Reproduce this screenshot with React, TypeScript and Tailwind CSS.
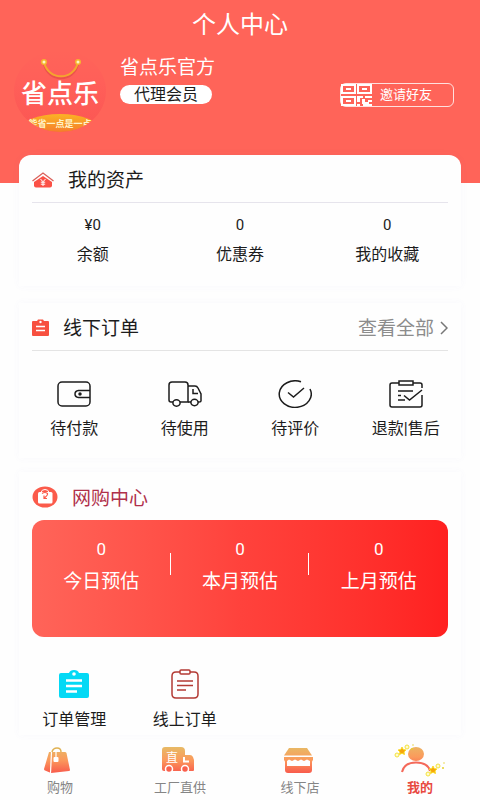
import React from 'react';

interface Item {
  label: string;
  icon: React.ReactNode;
}

interface Stat {
  label: string;
  value: string;
}

function Logo() {
  return (
    <svg width="94" height="84" viewBox="0 0 94 84" role="img" aria-label="省点乐">
      <defs>
        <linearGradient id="logo-bg" x1="0" y1="0" x2="0" y2="1">
          <stop offset="0" stopColor="#ff6459" />
          <stop offset="0.4" stopColor="#ff5f59" />
          <stop offset="1" stopColor="#fb5552" />
        </linearGradient>
        <linearGradient id="logo-gold" x1="0" y1="0" x2="0" y2="1">
          <stop offset="0" stopColor="#fbb324" />
          <stop offset="0.6" stopColor="#f57a2c" />
        </linearGradient>
        <clipPath id="logo-clip">
          <ellipse cx="46" cy="41" rx="46" ry="41" />
        </clipPath>
      </defs>
      <g clipPath="url(#logo-clip)">
        <rect width="94" height="84" fill="url(#logo-bg)" />
        <ellipse cx="46" cy="80" rx="40" ry="16" fill="url(#logo-gold)" />
        <text x="46" y="77" textAnchor="middle" fontSize="9" fontWeight="700" fill="#fff3c8">
          能省一点是一点
        </text>
      </g>
      <path d="M30 14C34 33 60 33 64 14" fill="none" stroke="#d8433f" strokeWidth="2" opacity="0.5" />
      <path d="M30 12C34 31 60 31 64 12" fill="none" stroke="#f4a52e" strokeWidth="2" />
      <circle cx="30" cy="12" r="3" fill="#f5b52f" />
      <circle cx="64" cy="12" r="3" fill="#f5b52f" />
      <circle cx="30" cy="12" r="1.5" fill="#fff6c4" />
      <circle cx="64" cy="12" r="1.5" fill="#fff6c4" />
      <text x="46" y="53" textAnchor="middle" fontSize="26" fontWeight="500" fill="#fff">
        省点乐
      </text>
    </svg>
  );
}

function QrIcon() {
  return (
    <svg width="31" height="22" viewBox="0 0 31 22" aria-hidden="true">
      <g fill="none" stroke="#fff" strokeWidth="2">
        <rect x="1" y="1" width="13" height="8" />
        <rect x="17" y="1" width="13" height="8" />
        <rect x="1" y="13" width="13" height="8" />
      </g>
      <path
        d="M5 4h5v2H5zM21 4h5v2h-5zM5 16h5v2H5zM16 12h6v2h-3v4h-3zM24 12h7v2h-7zM21 15h3v3h3v-2h4v2h-3v2h3v2h-9v-2h-1zM16 20h3v2h-3z"
        fill="#fff"
      />
    </svg>
  );
}

function HouseIcon() {
  return (
    <svg width="22" height="16" viewBox="0 0 22 16" aria-hidden="true">
      <path d="M0.5 9L11 1L21.500 9" fill="none" stroke="#d9605a" strokeWidth="1.300" />
      <path d="M2 10L11 4L20 10V13.500Q20 15.500 18 15.500H4Q2 15.500 2 13.500Z" fill="#fb5146" />
      <path d="M8.500 7L11 9.800L13.500 7M11 9.800V14M8.800 10.200H13.200M8.800 12.200H13.200" fill="none" stroke="#fff" strokeWidth="1" />
    </svg>
  );
}

function BoardIcon() {
  return (
    <svg width="17" height="17" viewBox="0 0 17 17" aria-hidden="true">
      <path d="M1 2H5L6 0.500H11L12 2H16Q17 2 17 3V16Q17 17 16 17H1Q0 17 0 16V3Q0 2 1 2Z" fill="#f7503f" />
      <circle cx="8.500" cy="3" r="1.200" fill="#fff" />
      <path d="M4 7.500H13M4 11.500H13" stroke="#fff" strokeWidth="1.400" />
    </svg>
  );
}

function BagIcon() {
  return (
    <svg width="26" height="22" viewBox="0 0 26 22" aria-hidden="true">
      <ellipse cx="13" cy="11" rx="12.500" ry="10.500" fill="#fb5b4b" />
      <path d="M9 6.500Q9.500 3.500 13 3.500Q16.500 3.500 17 6.500" fill="none" stroke="#fff" strokeWidth="1" />
      <rect x="6" y="6" width="14.500" height="11.500" rx="1.500" fill="#fff" />
      <path d="M10 7.500Q13 5.500 15.500 7.500Q16 9 12.500 12M12 9.500V12.500H15" fill="none" stroke="#fb5b4b" strokeWidth="1.200" />
    </svg>
  );
}

const WalletIcon = () => (
  <svg width="34" height="28" viewBox="0 0 34 28" fill="none" stroke="#1c1c1c" strokeWidth="1.500" aria-hidden="true">
    <rect x="1" y="2" width="32" height="24" rx="4" />
    <path d="M33 10.500H21.500Q18 11 18 14T21.500 17.500H33" />
    <circle cx="23" cy="14" r="1" fill="#1c1c1c" />
  </svg>
);

const TruckIcon = () => (
  <svg width="34" height="28" viewBox="0 0 34 28" fill="none" stroke="#1c1c1c" strokeWidth="1.500" aria-hidden="true">
    <path d="M5 22H3Q1 22 1 20V5Q1 2 4 2H17Q20 2 20 5V22H12M20 6H27Q29 6 30 8L33 14V21Q33 22 31 22H30" />
    <path d="M25 9V13.500H30M20 22H23" />
    <ellipse cx="8.500" cy="23" rx="3.600" ry="3.200" />
    <ellipse cx="26.500" cy="22.500" rx="3.600" ry="3.200" />
  </svg>
);

const CheckIcon = () => (
  <svg width="34" height="28" viewBox="0 0 34 28" fill="none" stroke="#1c1c1c" strokeWidth="1.500" aria-hidden="true">
    <path d="M23 1.700A16 13.300 0 1 0 32 9" />
    <path d="M10 12.500L15.500 17L26 8" />
  </svg>
);

const RefundIcon = () => (
  <svg width="34" height="28" viewBox="0 0 34 28" fill="none" stroke="#1c1c1c" strokeWidth="1.500" aria-hidden="true">
    <path d="M10 3H3Q1 3 1 5V25Q1 27 3 27H31Q33 27 33 25V15M33 8V5Q33 3 31 3H24" />
    <rect x="10" y="1" width="14" height="4" />
    <path d="M9 11H24M9 15.500H12M9 20H16M15 15.500L20.500 20L33 10" />
  </svg>
);

const ManageIcon = () => (
  <svg width="32" height="30" viewBox="0 0 32 30" aria-hidden="true">
    <path d="M3 4H11Q12 1 16 1T21 4H29Q31 4 31 6V27Q31 29 29 29H3Q1 29 1 27V6Q1 4 3 4Z" fill="#04d9f5" />
    <circle cx="16" cy="5" r="1.800" fill="#fff" />
    <path d="M8 11.500H24M8 17H24M8 22.500H19" stroke="#fff" strokeWidth="2.600" />
  </svg>
);

const OnlineIcon = () => (
  <svg width="28" height="30" viewBox="0 0 28 30" fill="none" stroke="#b33a34" strokeWidth="1.500" aria-hidden="true">
    <path d="M9 3H5Q1 3 1 7V25Q1 29 5 29H23Q27 29 27 25V7Q27 3 23 3H19" />
    <rect x="9" y="1" width="10" height="4" rx="1" />
    <path d="M6 12H22M6 16.500H22M6 21H15" />
  </svg>
);

function TabGradient({ id }: { id: string }) {
  return (
    <linearGradient id={id} gradientUnits="userSpaceOnUse" x1="0" y1="0" x2="0" y2="28">
      <stop offset="0" stopColor="#e6bd66" />
      <stop offset="0.500" stopColor="#fb9a5c" />
      <stop offset="1" stopColor="#f8564b" />
    </linearGradient>
  );
}

const ShopTabIcon = () => (
  <svg width="34" height="28" viewBox="0 0 34 28" aria-hidden="true">
    <TabGradient id="tab-shop" />
    <path d="M9 6Q10 2 14 2T18 6" fill="none" stroke="#e0b254" strokeWidth="1.500" />
    <path d="M6 6H22Q23 6 23.500 7L27 24Q27 25 26 25L8 27L2 24.500Q1 24 1 23Z" fill="url(#tab-shop)" />
    <path d="M8.500 6L7.500 27" stroke="#fff" strokeWidth="1.200" />
    <path d="M13 5V12" stroke="#fff" strokeWidth="1.200" />
    <rect x="10.500" y="11" width="5" height="5" rx="1" fill="#fff" />
  </svg>
);

const FactoryTabIcon = () => (
  <svg width="38" height="28" viewBox="0 0 38 28" aria-hidden="true">
    <TabGradient id="tab-factory" />
    <path d="M4 1H20Q24 1 24 5V9H29Q31 9 32 11L33 14V24Q33 25 32 25H3Q1 25 1 23V4Q1 1 4 1Z" fill="url(#tab-factory)" />
    <text x="11" y="16" textAnchor="middle" fontSize="12" fill="#fff">
      直
    </text>
    <path d="M23 11V15.500H28" fill="none" stroke="#fff" strokeWidth="2" />
    <circle cx="8" cy="23" r="3.500" fill="#f9604d" stroke="#fff" strokeWidth="1.500" />
    <circle cx="24" cy="23" r="3.500" fill="#f9604d" stroke="#fff" strokeWidth="1.500" />
  </svg>
);

const StoreTabIcon = () => (
  <svg width="36" height="28" viewBox="0 0 36 28" aria-hidden="true">
    <TabGradient id="tab-store" />
    <path d="M7 2H25L30 9.500H2Z" fill="url(#tab-store)" />
    <path
      fillRule="evenodd"
      d="M2 11H31V14Q30 15 30 16V24Q30 27 27 27H6Q3 27 3 24V16Q3 15 2 14ZM5 15V20H28V15L25 13.500L22 15L19 13.500L16 15L13 13.500L10 15L7 13.500Z"
      fill="url(#tab-store)"
    />
  </svg>
);

const MineTabIcon = () => (
  <svg width="54" height="34" viewBox="0 0 54 34" aria-hidden="true">
    <TabGradient id="tab-mine" />
    <ellipse cx="23" cy="11" rx="8" ry="7" fill="url(#tab-mine)" />
    <path d="M9 29Q11 19.500 23 19.500T37 28" fill="none" stroke="#f4695a" strokeWidth="2" />
    <path d="M9 4L10.200 6.500L13 7L11 9L11.500 11.500L9 10.300L6.500 11.500L7 9L5 7L7.800 6.500Z" fill="#f6a50c" stroke="#fbdc28" />
    <path d="M40 23L41.200 25.500L44 26L42 28L42.500 30.500L40 29.300L37.500 30.500L38 28L36 26L38.800 25.500Z" fill="#f6a50c" stroke="#fbdc28" />
    <g fill="#fffbd0" stroke="#f4e23c">
      <circle cx="4" cy="12" r="2" />
      <circle cx="14" cy="4" r="2" />
      <circle cx="35" cy="31" r="2" />
      <circle cx="45" cy="23" r="2" />
    </g>
    <g fill="#e5cf2a">
      <circle cx="19" cy="6" r="1" />
      <circle cx="20" cy="2" r="1" opacity="0.500" />
      <circle cx="50" cy="25" r="1" />
      <circle cx="51" cy="20" r="1" opacity="0.500" />
    </g>
  </svg>
);

const assets: Stat[] = [
  { label: '余额', value: '¥0' },
  { label: '优惠券', value: '0' },
  { label: '我的收藏', value: '0' },
];

const orders: Item[] = [
  { label: '待付款', icon: <WalletIcon /> },
  { label: '待使用', icon: <TruckIcon /> },
  { label: '待评价', icon: <CheckIcon /> },
  { label: '退款|售后', icon: <RefundIcon /> },
];

const estimates: Stat[] = [
  { label: '今日预估', value: '0' },
  { label: '本月预估', value: '0' },
  { label: '上月预估', value: '0' },
];

const onlineItems: Item[] = [
  { label: '订单管理', icon: <ManageIcon /> },
  { label: '线上订单', icon: <OnlineIcon /> },
];

const tabs: Item[] = [
  { label: '购物', icon: <ShopTabIcon /> },
  { label: '工厂直供', icon: <FactoryTabIcon /> },
  { label: '线下店', icon: <StoreTabIcon /> },
  { label: '我的', icon: <MineTabIcon /> },
];

const cardClass = 'mx-[19px] bg-[#fefefe] shadow-[0_0_8px_rgba(90,90,200,0.04)]';

export default function App() {
  return (
    <div className="flex min-h-screen flex-col bg-[#fefefe] font-[Roboto,'Noto_Sans_CJK_SC',sans-serif] text-[#1c1c1c]">
      <header className="h-[183px] bg-[#ff6459] text-white">
        <h1 className="pt-[9px] text-center text-2xl leading-8 font-normal">个人中心</h1>
        <div className="flex items-start pt-[9px] pr-[26px] pl-[14px]">
          <Logo />
          <div className="ml-3 flex flex-col items-start">
            <p className="mt-1.5 text-[19px] leading-6">省点乐官方</p>
            <span className="mt-[5px] rounded-full bg-white px-3.5 text-base leading-[19px] text-[#1c1c1c]">代理会员</span>
          </div>
          <button type="button" className="mt-[33px] ml-auto flex h-6 w-[114px] items-center rounded-md border border-white/80">
            <QrIcon />
            <span className="ml-2 text-[13px]">邀请好友</span>
          </button>
        </div>
      </header>

      <main>
        <section className={`${cardClass} relative -mt-7 rounded-t-xl pb-[19px]`}>
          <div className="mx-[13px] flex h-12 items-center border-b border-[#e6e4ec] pt-0.5">
            <HouseIcon />
            <h2 className="ml-3.5 pt-1 text-[19px]">我的资产</h2>
          </div>
          <dl className="mt-3 grid grid-cols-3 text-center">
            {assets.map(item => (
              <div key={item.label} className="flex flex-col-reverse gap-2">
                <dt className="text-base leading-6">{item.label}</dt>
                <dd className="text-[15px] leading-5">{item.value}</dd>
              </div>
            ))}
          </dl>
        </section>

        <section className={`${cardClass} mt-[17px] pb-[17px]`}>
          <div className="mx-[13px] flex h-12 items-center border-b border-[#e4e4e4] pt-0.5">
            <BoardIcon />
            <h2 className="ml-3.5 pt-1 text-[19px]">线下订单</h2>
            <a href="#orders" className="ml-auto flex items-center gap-1.5 text-[19px] text-[#8c8c8c]">
              <span className="pt-1">查看全部</span>
              <svg width="8" height="14" viewBox="0 0 8 14" fill="none" stroke="#777" strokeWidth="1.500" aria-hidden="true">
                <path d="M1 1L7 7L1 13" />
              </svg>
            </a>
          </div>
          <div className="mt-[29px] grid grid-cols-4">
            {orders.map(item => (
              <button key={item.label} type="button" className="flex flex-col items-center gap-[9px]">
                {item.icon}
                <span className="text-base leading-6">{item.label}</span>
              </button>
            ))}
          </div>
        </section>

        <section className={`${cardClass} mt-3.5 pb-[3px]`}>
          <div className="mx-[13px] flex h-12 items-center pt-0.5">
            <BagIcon />
            <h2 className="ml-3.5 pt-1 text-[19px] text-[#b0304a]">网购中心</h2>
          </div>
          <dl className="mx-[13px] grid grid-cols-3 rounded-xl bg-linear-to-r from-[#ff6459] via-[#ff423c] to-[#ff2020] pt-[19px] pb-[43px] text-center text-white">
            {estimates.map(item => (
              <div key={item.label} className="relative flex flex-col-reverse gap-[11px]">
                <dt className="text-[19px] leading-6">{item.label}</dt>
                <dd className="text-[17px] leading-5">{item.value}</dd>
                {item !== estimates[estimates.length - 1] && (
                  <span className="absolute top-3.5 right-0 h-[22px] w-px bg-white" />
                )}
              </div>
            ))}
          </dl>
          <div className="mt-8 grid grid-cols-4">
            {onlineItems.map(item => (
              <button key={item.label} type="button" className="flex flex-col items-center gap-[9px]">
                {item.icon}
                <span className="text-base leading-6">{item.label}</span>
              </button>
            ))}
          </div>
        </section>
      </main>

      <nav className="relative mt-auto grid grid-cols-4 bg-[#fefefe] pb-0.5">
        {tabs.map(tab => (
          <a
            key={tab.label}
            href="#tab"
            className={`flex flex-col items-center text-[13px] leading-5 ${
              tab.label === '我的' ? 'font-bold text-[#e8483f]' : 'font-normal text-[#858585]'
            }`}
          >
            <span className="flex h-9 items-center">{tab.icon}</span>
            {tab.label}
          </a>
        ))}
      </nav>
    </div>
  );
}
